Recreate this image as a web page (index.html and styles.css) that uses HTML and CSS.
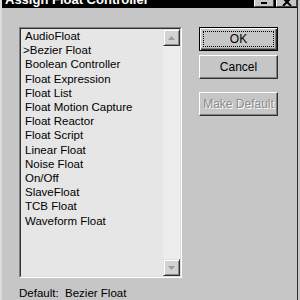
FILE: index.html
```html
<!DOCTYPE html>
<html>
<head>
<meta charset="utf-8">
<link rel="stylesheet" href="styles.css">
</head>
<body>
<div class="window">
  <div class="titlebar">
    <span class="title">Assign Float Controller</span>
    <div class="tb-buttons">
      <span class="tb-btn tb-min"><svg width="6" height="3" viewBox="0 0 6 3"><rect x="0" y="0" width="6" height="2" fill="#000"/></svg></span>
      <span class="tb-btn tb-close"><svg width="10" height="8" viewBox="0 0 10 8"><path d="M1 0 L9 8 M9 0 L1 8" stroke="#000" stroke-width="2" fill="none"/></svg></span>
    </div>
  </div>
  <div class="client">
    <div class="main">
      <div class="listbox">
        <div class="listbox-inner">
          <ul class="items">
            <li>AudioFloat</li>
            <li class="current">&gt;Bezier Float</li>
            <li>Boolean Controller</li>
            <li>Float Expression</li>
            <li>Float List</li>
            <li>Float Motion Capture</li>
            <li>Float Reactor</li>
            <li>Float Script</li>
            <li>Linear Float</li>
            <li>Noise Float</li>
            <li>On/Off</li>
            <li>SlaveFloat</li>
            <li>TCB Float</li>
            <li>Waveform Float</li>
          </ul>
          <div class="scrollbar">
            <div class="sb-btn"><svg width="7" height="4" viewBox="0 0 7 4"><path d="M3.5 0 L7 4 L0 4 Z" fill="#9a9a9a"/></svg></div>
            <div class="track"></div>
            <div class="sb-btn"><svg width="7" height="4" viewBox="0 0 7 4"><path d="M0 0 L7 0 L3.5 4 Z" fill="#9a9a9a"/></svg></div>
          </div>
        </div>
      </div>
      <div class="buttons">
        <button class="btn btn-default">OK</button>
        <button class="btn btn-cancel">Cancel</button>
        <button class="btn btn-disabled">Make Default</button>
      </div>
    </div>
    <div class="status">Default:&nbsp; Bezier Float</div>
  </div>
</div>
</body>
</html>
```
FILE: styles.css
```css
* { box-sizing: border-box; }
html, body { margin: 0; padding: 0; }
body { background: #c6c6c6; font-family: "Liberation Sans", Arial, sans-serif; }

.window {
  width: 298px;
  height: 300px;
  background: #c6c6c6;
  border-left: 2px solid #dcdcdc;
  border-right: 1px solid #303030;
  display: flex;
  flex-direction: column;
  overflow: hidden;
}

.titlebar {
  height: 8px;
  background: #000;
  display: flex;
  justify-content: space-between;
  align-items: flex-start;
  overflow: hidden;
  flex: none;
}
.title {
  color: #fff;
  font-weight: bold;
  font-size: 13px;
  line-height: 13px;
  margin-top: -7px;
  padding-left: 3px;
  white-space: nowrap;
}
.tb-buttons { display: flex; gap: 2px; }
.tb-btn {
  display: flex;
  align-items: flex-end;
  justify-content: center;
  height: 7px;
  background: #c6c6c6;
  border-bottom: 1px solid #404040;
  border-right: 1px solid #404040;
  border-left: 1px solid #fff;
  padding-bottom: 1px;
}
.tb-min { width: 20px; }
.tb-close { width: 21px; padding-bottom: 0; }
.tb-btn svg { display: block; }

.client {
  flex: 1;
  padding: 19px 0 0 17px;
  display: flex;
  flex-direction: column;
}
.main { display: flex; align-items: flex-start; }

.listbox {
  width: 163px;
  height: 251px;
  border: 1px solid;
  border-color: #808080 #ffffff #ffffff #808080;
}
.listbox-inner {
  height: 100%;
  border: 1px solid;
  border-color: #303030 #dcdcdc #dcdcdc #303030;
  background: #e6e6e6;
  display: flex;
}
.items {
  flex: 1;
  margin: 0;
  padding: 0 0 0 4px;
  list-style: none;
  font-size: 11.5px;
  line-height: 14.2px;
  color: #000;
}
.items .current { text-indent: -2px; }

.scrollbar {
  width: 17px;
  display: flex;
  flex-direction: column;
  background: #ededed;
}
.track { flex: 1; }
.sb-btn {
  height: 17px;
  background: #d2d2d2;
  border: 1px solid;
  border-color: #e2e2e2 #303030 #303030 #e2e2e2;
  box-shadow: inset 1px 1px #ffffff, inset -1px -1px #8a8a8a;
  display: flex;
  align-items: center;
  justify-content: center;
}
.sb-btn svg { display: block; }

.buttons {
  margin-left: 17px;
  width: 79px;
  display: flex;
  flex-direction: column;
}
.btn {
  height: 24px;
  padding: 0;
  font-family: "Liberation Sans", Arial, sans-serif;
  font-size: 12px;
  color: #000;
  background: #c6c6c6;
  border: 1px solid;
  border-color: #ffffff #303030 #303030 #ffffff;
  box-shadow: inset -1px -1px #808080;
}
.btn-default {
  border: 1px solid #000;
  box-shadow: inset 1px 1px #ffffff, inset -1px -1px #303030, inset -2px -2px #808080;
  outline: 1px dotted #000;
  outline-offset: -5px;
}
.btn-cancel { margin-top: 4px; }
.btn-disabled {
  margin-top: 13px;
  color: #8c8c8c;
  text-shadow: 1px 1px #ffffff;
}

.status {
  margin-top: 8px;
  font-size: 11.5px;
  line-height: 14px;
  color: #000;
  white-space: nowrap;
}
```
